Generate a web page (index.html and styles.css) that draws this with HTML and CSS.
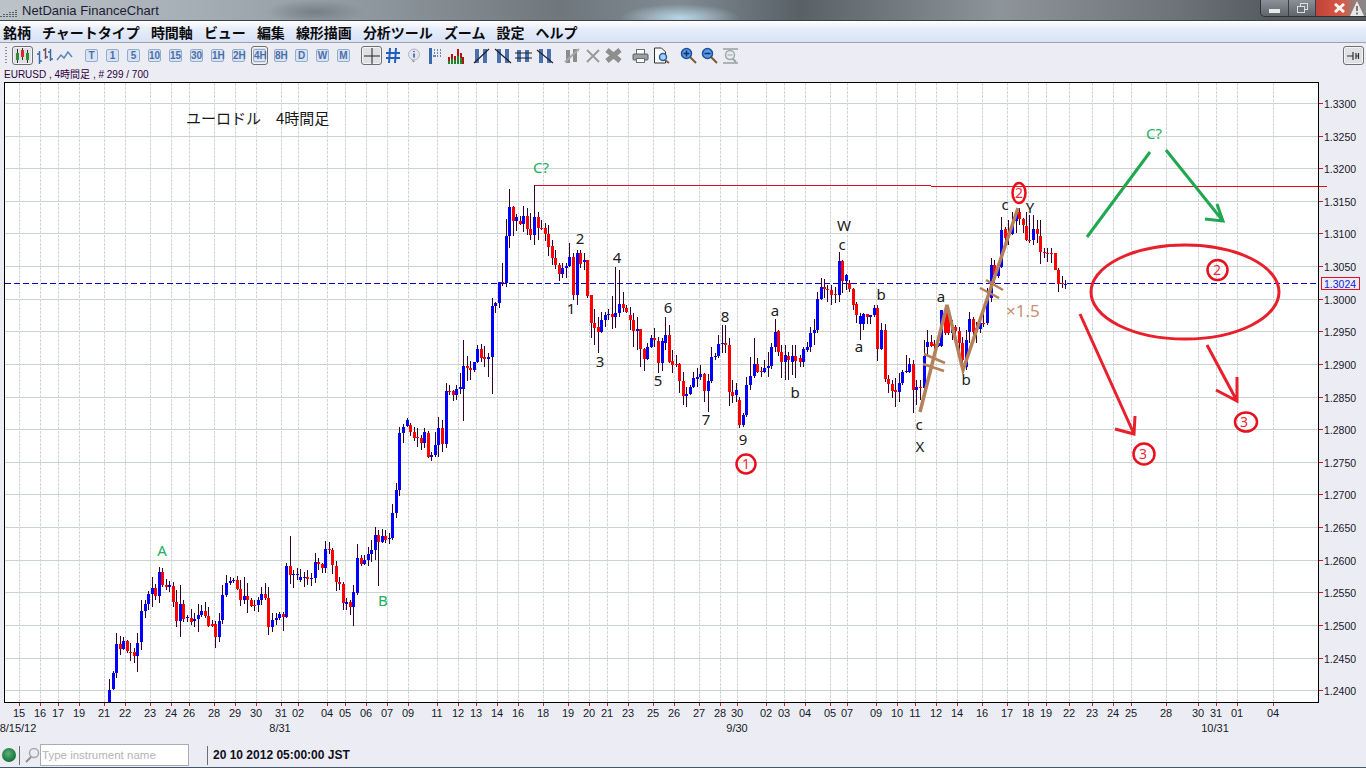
FILE: index.html
```html
<!DOCTYPE html>
<html lang="ja">
<head>
    <meta charset="UTF-8">
    <title>NetDania FinanceChart</title>
    <link rel="stylesheet" href="styles.css">
</head>
<body>

<div class="titlebar">
    <svg class="app-icon" width="18" height="10" viewBox="0 0 18 10">
        <path d="M1 9V7M4 9V5M7 9V6M10 9V3M13 9V4M16 9V1" stroke="#5a6068" stroke-width="2" stroke-dasharray="1 1"/>
    </svg>
    <span class="app-title">NetDania FinanceChart</span>
    <div class="win-controls">
        <div class="win-btn win-min"><span class="min-bar"></span></div>
        <div class="win-btn win-restore"><span class="restore-back"></span><span class="restore-front"></span></div>
        <div class="win-btn win-close">
            <svg width="13" height="10" viewBox="0 0 13 10"><path d="M2 1l9 8M11 1l-9 8" stroke="#f4f4f4" stroke-width="3"/></svg>
            <svg class="warn" width="14" height="15" viewBox="0 0 14 15"><path d="M7 0L14 15H0z" fill="#e8e8e8"/><path d="M7 5v5M7 11.500v2" stroke="#555" stroke-width="1.500"/></svg>
        </div>
    </div>
</div>

<div class="menubar">
    <span>銘柄</span>
    <span>チャートタイプ</span>
    <span>時間軸</span>
    <span>ビュー</span>
    <span>編集</span>
    <span>線形描画</span>
    <span>分析ツール</span>
    <span>ズーム</span>
    <span>設定</span>
    <span>ヘルプ</span>
</div>

<div class="toolbar">
    <div class="grip"></div>
    <div class="tool-group">
        <div class="tool toggled">
            <svg width="18" height="16" viewBox="0 0 18 16">
                <path d="M3.500 1v14M8.500 0v12M13.500 2v13" stroke="#303030"/>
                <rect x="2" y="5" width="3" height="7" fill="#2f8a3c"/>
                <rect x="7" y="2" width="3" height="7" fill="#d02c2c"/>
                <rect x="12" y="5" width="3" height="7" fill="#2f8a3c"/>
            </svg>
        </div>
        <div class="tool">
            <svg width="18" height="18" viewBox="0 0 18 18" fill="none">
                <path d="M4.500 4v13M2 7h3M4 14h3" stroke="#3a68a8" stroke-width="1.500"/>
                <path d="M10.500 1v11M8 3h3M10 10h3" stroke="#6a5060" stroke-width="1.500"/>
                <path d="M15.500 2v12M13 5h3M15 12h3" stroke="#3a68a8" stroke-width="1.500"/>
            </svg>
        </div>
        <div class="tool">
            <svg width="17" height="12" viewBox="0 0 17 12" fill="none">
                <path d="M1 10l4-5 3 3 4-6 4 5" stroke="#5a86b8" stroke-width="1.500"/>
            </svg>
        </div>
    </div>
    <div class="tool-group periods">
        <div class="tool"><span class="period">T</span></div>
        <div class="tool"><span class="period">1</span></div>
        <div class="tool"><span class="period">5</span></div>
        <div class="tool"><span class="period">10</span></div>
        <div class="tool"><span class="period">15</span></div>
        <div class="tool"><span class="period">30</span></div>
        <div class="tool"><span class="period">1H</span></div>
        <div class="tool"><span class="period">2H</span></div>
        <div class="tool toggled narrow"><span class="period">4H</span></div>
        <div class="tool"><span class="period">8H</span></div>
        <div class="tool"><span class="period">D</span></div>
        <div class="tool"><span class="period">W</span></div>
        <div class="tool"><span class="period">M</span></div>
    </div>
    <div class="tool-group cross-group">
        <div class="tool toggled">
            <svg width="16" height="16" viewBox="0 0 16 16"><path d="M8 0v16M0 8h16" stroke="#202020"/></svg>
        </div>
        <div class="tool">
            <svg width="16" height="17" viewBox="0 0 16 17"><path d="M5 1L4 16M11 1l-1 15M1 6h14M1 11h14" stroke="#1f5fc0" stroke-width="2"/></svg>
        </div>
        <div class="tool">
            <svg width="14" height="15" viewBox="0 0 14 15">
                <path d="M7 14l-2-3" stroke="#a0a0a0" stroke-width="2"/>
                <circle cx="7" cy="6.500" r="5.500" fill="#e4e4ea" stroke="#b4b4c0"/>
                <path d="M7 3v1M7 5.500v4" stroke="#2a4fb0" stroke-width="1.500"/>
            </svg>
        </div>
        <div class="tool">
            <svg width="16" height="18" viewBox="0 0 16 18" fill="none">
                <path d="M3.500 1v16" stroke="#3a68a8" stroke-width="3"/>
                <path d="M6 9h3M7 3h1M10 3h1M13 3h1M7 6h1M10 6h1M13 6h1M10 9h1M13 9h1" stroke="#3a68a8" stroke-width="1.500"/>
            </svg>
        </div>
        <div class="tool">
            <svg width="17" height="16" viewBox="0 0 17 16">
                <path d="M2 16V9M5 16V6M8 16V8M11 16V1M14 16V5M16 16V9" stroke="#b01414" stroke-width="2"/>
                <path d="M2 16v-3M5 16v-5M8 16v-4M11 16v-8M14 16v-6" stroke="#1c8a2c" stroke-width="2"/>
            </svg>
        </div>
    </div>
    <div class="tool-group lines-group">
        <div class="tool"><svg width="18" height="16" viewBox="0 0 18 16"><path d="M4 1v14M12 1v14" stroke="#4a70b0" stroke-width="4"/><path d="M1 15L16 1" stroke="#222" stroke-width="1.200"/></svg></div>
        <div class="tool"><svg width="18" height="16" viewBox="0 0 18 16"><path d="M5 1v14M13 1v14" stroke="#4a70b0" stroke-width="4"/><path d="M1 1l16 14" stroke="#222" stroke-width="1.200"/></svg></div>
        <div class="tool"><svg width="18" height="16" viewBox="0 0 18 16"><path d="M4 2v12M12 2v12" stroke="#4a70b0" stroke-width="4"/><path d="M0 5h17M0 10h17" stroke="#222"/></svg></div>
        <div class="tool"><svg width="18" height="16" viewBox="0 0 18 16"><path d="M5 1v14M13 1v14" stroke="#4a70b0" stroke-width="4"/><path d="M1 2l16 13" stroke="#222" stroke-width="1.200"/></svg></div>
    </div>
    <div class="tool-group delete-group">
        <div class="tool"><svg width="16" height="16" viewBox="0 0 16 16"><path d="M4 2v13M11 1v13" stroke="#8c8c8c" stroke-width="4"/><path d="M1 14L15 1" stroke="#a8a8a8" stroke-width="2"/></svg></div>
        <div class="tool"><svg width="14" height="14" viewBox="0 0 14 14"><path d="M1 1l12 12M13 1L1 13" stroke="#9a9a9a" stroke-width="2"/></svg></div>
        <div class="tool"><svg width="17" height="15" viewBox="0 0 17 15"><path d="M2 2l13 11M15 2L2 13" stroke="#8e8e8e" stroke-width="5"/></svg></div>
    </div>
    <div class="tool-group print-group">
        <div class="tool">
            <svg width="17" height="16" viewBox="0 0 17 16">
                <rect x="4.500" y="1.500" width="8" height="5" fill="#fff" stroke="#707070"/>
                <rect x="1" y="6" width="15" height="6" rx="1" fill="#9aa0a8" stroke="#5a5f66"/>
                <rect x="4.500" y="10.500" width="8" height="4" fill="#fff" stroke="#707070"/>
            </svg>
        </div>
        <div class="tool">
            <svg width="18" height="17" viewBox="0 0 18 17" fill="none">
                <path d="M1.500 1h7l4 4v11h-11z" fill="#fff" stroke="#303030"/>
                <path d="M12 13l4 3" stroke="#806040" stroke-width="2"/>
                <circle cx="10" cy="10" r="3.500" fill="#a8d0f0" stroke="#2a5fa8" stroke-width="1.500"/>
            </svg>
        </div>
    </div>
    <div class="tool-group zoom-group">
        <div class="tool">
            <svg width="17" height="17" viewBox="0 0 17 17" fill="none">
                <path d="M10 10l6 6" stroke="#7a5a30" stroke-width="2"/>
                <circle cx="6.500" cy="6.500" r="5" fill="#5a9ae0" stroke="#1c4fa0" stroke-width="1.500"/>
                <path d="M3.500 6.500h6M6.500 3.500v6" stroke="#10306a" stroke-width="1.500"/>
            </svg>
        </div>
        <div class="tool">
            <svg width="17" height="17" viewBox="0 0 17 17" fill="none">
                <path d="M10 10l6 6" stroke="#7a5a30" stroke-width="2"/>
                <circle cx="6.500" cy="6.500" r="5" fill="#5a9ae0" stroke="#1c4fa0" stroke-width="1.500"/>
                <path d="M3.500 6.500h6" stroke="#10306a" stroke-width="1.500"/>
            </svg>
        </div>
        <div class="tool">
            <svg width="17" height="16" viewBox="0 0 17 16" fill="none">
                <path d="M1 1h15M1 15h15" stroke="#9aa0a0" stroke-width="1.500"/>
                <path d="M10 10l4 4" stroke="#a0a0a0" stroke-width="2"/>
                <circle cx="8" cy="7" r="4.500" fill="#e4ecea" stroke="#a0aaa8" stroke-width="1.500"/>
                <path d="M5.500 7h5" stroke="#a0a0a0"/>
            </svg>
        </div>
    </div>
    <div class="tool toggled pin">
        <svg width="14" height="12" viewBox="0 0 14 12"><path d="M0 6h6M6 2v8M9 3v6M11.500 3v6M9 6h3" stroke="#303030" stroke-width="1.200"/></svg>
    </div>
</div>

<div class="info-label">EURUSD , 4時間足 , # 299 / 700</div>

<svg id="chart" class="chart" width="1366" height="660" viewBox="0 82 1366 660">
    <rect class="plot-bg" x="4.500" y="82.500" width="1314" height="620"/>
    <g id="grid"></g>
    <path class="stop-line dark" d="M534 185.500H931"/>
    <path class="stop-line" d="M931 186.500H1327"/>
    <path class="last-line" d="M5 283.500H1318"/>
    <g id="candles"></g>
    <rect class="plot-frame" x="4.500" y="82.500" width="1314" height="620"/>
    <g id="axis"></g>

    <rect class="last-box" x="1321.500" y="277.500" width="38" height="12"/>
    <text class="last-text" x="1324" y="288">1.3024</text>

    <text class="title-note" x="186" y="124">ユーロドル</text>
    <text class="title-note" x="276" y="124">4時間足</text>

    <text class="wave green" x="541" y="173">C?</text>
    <text class="wave green" x="162" y="556">A</text>
    <text class="wave green" x="383" y="606">B</text>
    <text class="wave green" x="1154" y="139">C?</text>

    <text class="wave" x="580" y="244">2</text>
    <text class="wave" x="571" y="314">1</text>
    <text class="wave" x="617" y="263">4</text>
    <text class="wave" x="600" y="367">3</text>
    <text class="wave" x="668" y="313">6</text>
    <text class="wave" x="658" y="386">5</text>
    <text class="wave" x="725" y="322">8</text>
    <text class="wave" x="706" y="425">7</text>
    <text class="wave" x="743" y="445">9</text>
    <text class="wave" x="775" y="316">a</text>
    <text class="wave" x="795" y="398">b</text>
    <text class="wave" x="844" y="231">W</text>
    <text class="wave" x="842" y="250">c</text>
    <text class="wave" x="859" y="352">a</text>
    <text class="wave" x="881" y="300">b</text>
    <text class="wave" x="941" y="302">a</text>
    <text class="wave" x="966" y="385">b</text>
    <text class="wave" x="919" y="430">c</text>
    <text class="wave" x="920" y="452">X</text>
    <text class="wave" x="1005" y="210">c</text>
    <text class="wave" x="1030" y="213">Y</text>
    <text class="times" x="1006" y="317">×1.5</text>

    <path class="brown" d="M920 412L947 305L963 370L1018 208"/>
    <path class="brown thin" d="M924 354L945 363M923 364L944 371M986 280L1003 290M980 288L999 298"/>

    <path class="green-stroke" d="M1087 237L1150 152M1166 150L1223 221M1217 204L1223 221L1205 219"/>
    <ellipse class="red-stroke" cx="1185" cy="292" rx="94" ry="47"/>
    <path class="red-stroke" d="M1080 314L1134 434M1135 416L1134 434L1115 429M1207 345L1237 401M1237 377L1237 401L1216 390"/>

    <circle class="red-ring" cx="746" cy="464" r="9.500"/>
    <text class="ring-text" x="746" y="469">1</text>
    <ellipse class="red-ring" cx="1019" cy="193" rx="6.500" ry="10"/>
    <text class="ring-text" x="1019" y="198">2</text>
    <circle class="red-ring" cx="1217.500" cy="270" r="10"/>
    <text class="ring-text" x="1217" y="275">2</text>
    <circle class="red-ring" cx="1144" cy="454" r="10.500"/>
    <text class="ring-text" x="1143" y="459">3</text>
    <ellipse class="red-ring" cx="1246" cy="422" rx="11" ry="9.500"/>
    <text class="ring-text" x="1244" y="427">3</text>
</svg>

<div class="statusbar">
    <span class="status-ball"></span>
    <span class="status-sep"></span>
    <svg class="status-search" width="15" height="16" viewBox="0 0 15 16" fill="none">
        <circle cx="9" cy="6" r="4.500" stroke="#a8a8a8" stroke-width="1.500"/>
        <path d="M6 10l-5 5" stroke="#909090" stroke-width="2"/>
    </svg>
    <div class="instrument-box">Type instrument name</div>
    <span class="status-sep date-sep"></span>
    <span class="status-date">20 10 2012 05:00:00 JST</span>
</div>

<script src="chart.js"></script>

</body>
</html>
```

FILE: styles.css
```css
* {
    box-sizing: border-box;
}

html, body {
    margin: 0;
    width: 1366px;
    height: 768px;
    overflow: hidden;
}

body {
    display: flex;
    flex-direction: column;
    font-family: "Liberation Sans", "Noto Sans CJK JP", sans-serif;
    background: repeating-conic-gradient(#f1eff4 0 25%, #e6ebf3 0 50%) 0 0 / 2px 2px;
}

.titlebar {
    display: flex;
    align-items: center;
    height: 21px;
    flex: none;
    border-bottom: 1px solid #3c4146;
    background:
        radial-gradient(ellipse 60px 14px at 680px 18px, #b9d6e8, transparent),
        radial-gradient(ellipse 50px 12px at 315px 12px, #777f86, transparent),
        linear-gradient(90deg, #bcc3c9 0, #a8b0b7 180px, #8e969d 380px, #6f777d 560px, #7f8a92 680px, #596167 800px, #8d949a 1000px, #6c7278 1180px, #565b60 1270px);
}

.app-icon {
    flex: none;
    margin-top: 5px;
}

.app-title {
    margin-left: 4px;
    font-size: 13px;
    letter-spacing: 0.05px;
    color: #1c1c34;
    white-space: nowrap;
}

.win-controls {
    display: flex;
    margin-left: auto;
    align-self: flex-start;
    height: 17px;
    border: 1px solid #2f3338;
    border-top: none;
    border-right: none;
    border-radius: 0 0 0 5px;
    overflow: hidden;
}

.win-btn {
    display: flex;
    align-items: center;
    justify-content: center;
    border-right: 1px solid #3a3f44;
    background: linear-gradient(#8a9096, #5f656b);
}

.win-min {
    width: 28px;
}

.min-bar {
    width: 11px;
    height: 4px;
    margin-top: 5px;
    background: #e8e8e8;
}

.win-restore {
    position: relative;
    width: 27px;
}

.restore-back, .restore-front {
    position: absolute;
    width: 8px;
    height: 7px;
    border: 1.5px solid #dcdcdc;
}

.restore-back {
    left: 11px;
    top: 3px;
}

.restore-front {
    left: 8px;
    top: 6px;
    background: #6c7278;
}

.win-close {
    position: relative;
    width: 50px;
    justify-content: flex-start;
    padding-left: 17px;
    border-right: none;
    background: linear-gradient(90deg, #c04438, #d85a48 55%, #9a7a70 72%, #868a8c);
}

.warn {
    position: absolute;
    right: 2px;
    top: 1px;
}

.menubar {
    display: flex;
    align-items: center;
    gap: 11px;
    height: 22px;
    flex: none;
    padding-left: 3px;
    border-bottom: 1px solid #a0a2a8;
    background: linear-gradient(#ffffff, #e8eefa 35%, #d6e2f6);
    font-family: "Noto Sans CJK JP", sans-serif;
    font-size: 14px;
    font-weight: 700;
    color: #0c0c0c;
    white-space: nowrap;
}

.toolbar {
    display: flex;
    align-items: center;
    height: 25px;
    flex: none;
    padding-left: 4px;
}

.grip {
    width: 2px;
    height: 18px;
    margin: 0 5px 0 1px;
    background: repeating-linear-gradient(#8a8f96 0 1px, transparent 1px 3px);
}

.tool-group {
    display: flex;
}

.tool {
    display: flex;
    align-items: center;
    justify-content: center;
    width: 21px;
    height: 19px;
    flex: none;
}

.toggled {
    border: 1px solid #6f6f72;
    border-radius: 3px;
    background: #dfe0e4;
    box-shadow: inset 0 0 0 1px #f4f4f4;
}

.narrow {
    width: 17px;
    margin: 0 2px;
}

.period {
    display: block;
    width: 13px;
    height: 13px;
    border: 1px solid #92acd2;
    border-radius: 2px;
    background: #d8e3f3;
    font-size: 10px;
    font-weight: 700;
    line-height: 11px;
    text-align: center;
    color: #4c6fa6;
    white-space: nowrap;
}

.periods {
    margin-left: 6px;
}

.cross-group {
    margin-left: 7px;
}

.lines-group {
    margin-left: 5px;
}

.delete-group, .print-group {
    margin-left: 6px;
}

.zoom-group {
    margin-left: 6px;
}

.pin {
    margin-left: auto;
    margin-right: 2px;
}

.info-label {
    height: 14px;
    flex: none;
    padding-left: 4px;
    font-size: 10px;
    line-height: 14px;
    color: #30003c;
    white-space: nowrap;
}

.chart {
    display: block;
    flex: none;
}

.plot-bg {
    fill: #fff;
}

.plot-frame {
    fill: none;
    stroke: #000;
    shape-rendering: crispEdges;
}

.grid-h {
    stroke: #ccd5cc;
    shape-rendering: crispEdges;
}

.grid-v {
    stroke: #d4d4dc;
    stroke-dasharray: 3 1;
    shape-rendering: crispEdges;
}

.tick {
    stroke: #e01020;
    shape-rendering: crispEdges;
}

.axis-text {
    font-size: 11px;
    fill: #181828;
}

.price-text {
    font-size: 10.5px;
    fill: #181828;
}

.stop-line {
    fill: none;
    stroke: #f00818;
    shape-rendering: crispEdges;
}

.stop-line.dark {
    stroke: #c81030;
}

.last-line {
    fill: none;
    stroke: #0000c8;
    stroke-dasharray: 6 3;
    shape-rendering: crispEdges;
}

.wick {
    fill: #300030;
}

.body-b {
    fill: #0000ff;
}

.body-r {
    fill: #ff0000;
}

.last-box {
    fill: none;
    stroke: #e01020;
    shape-rendering: crispEdges;
}

.last-text {
    font-size: 10.5px;
    fill: #1020e0;
}

.title-note {
    font-family: "Noto Sans CJK JP", sans-serif;
    font-size: 15px;
    fill: #181818;
}

.wave {
    font-family: "Noto Sans", sans-serif;
    font-size: 15px;
    text-anchor: middle;
    fill: #202020;
}

.wave.green {
    fill: #20b060;
}

.times {
    font-family: "Noto Sans", sans-serif;
    font-size: 17px;
    fill: #c89070;
}

.brown {
    fill: none;
    stroke: #b5805a;
    stroke-width: 3.5;
}

.brown.thin {
    stroke-width: 2.5;
}

.green-stroke {
    fill: none;
    stroke: #20a850;
    stroke-width: 3;
}

.red-stroke {
    fill: none;
    stroke: #e8202c;
    stroke-width: 3;
}

.red-ring {
    fill: none;
    stroke: #e8101c;
    stroke-width: 2.5;
}

.ring-text {
    font-family: "Noto Sans", sans-serif;
    font-size: 14px;
    text-anchor: middle;
    fill: #f02838;
}

.statusbar {
    display: flex;
    align-items: center;
    height: 26px;
    flex: none;
    padding: 2px 0 1px 2px;
    border-bottom: 1px solid #46566a;
}

.status-ball {
    width: 14px;
    height: 14px;
    flex: none;
    border-radius: 50%;
    background: radial-gradient(circle at 45% 40%, #5fb078, #0f7038 75%);
}

.status-sep {
    width: 1px;
    height: 19px;
    flex: none;
    margin-left: 3px;
    background: #6a6f76;
}

.status-search {
    flex: none;
    margin-left: 5px;
}

.instrument-box {
    width: 149px;
    height: 22px;
    flex: none;
    padding-left: 1px;
    border: 1px solid #a8acb4;
    background: #fff;
    font-size: 11.5px;
    line-height: 20px;
    color: #b4b4b8;
    white-space: nowrap;
}

.date-sep {
    margin-left: 18px;
}

.status-date {
    margin-left: 5px;
    font-size: 12px;
    font-weight: 700;
    color: #10101c;
    white-space: nowrap;
}
```

FILE: chart.js
```js
const SVG_NS = 'http://www.w3.org/2000/svg';

// date ticks along the bottom: [x, label]
const dateTicks = [
    [19,'15'],[40,'16'],[58,'17'],[79,'19'],[104,'21'],[125,'22'],[150,'23'],[171,'24'],[189,'26'],
    [214,'28'],[235,'29'],[256,'30'],[281,'31'],[298,'02'],[327,'04'],[345,'05'],[366,'06'],[387,'07'],
    [408,'09'],[437,'11'],[458,'12'],[476,'13'],[497,'14'],[518,'16'],[543,'18'],[568,'19'],[589,'20'],
    [607,'21'],[628,'23'],[653,'25'],[674,'26'],[699,'27'],[720,'28'],[737,'30'],[766,'02'],[784,'03'],
    [805,'04'],[830,'05'],[847,'07'],[876,'09'],[897,'10'],[915,'11'],[936,'12'],[957,'14'],[982,'16'],
    [1007,'17'],[1028,'18'],[1046,'19'],[1069,'22'],[1092,'23'],[1113,'24'],[1131,'25'],[1166,'28'],
    [1198,'30'],[1216,'31'],[1237,'01'],[1273,'04']
];

const monthLabels = [[18,'8/15/12'],[280,'8/31'],[737,'9/30'],[1215,'10/31']];

// candles, traced at 3x: [x, colour, body top, body bottom, wick top, wick bottom]
// each section has the origin of its trace
const candleSections = [
    { x: 90, y: 400, rows: [
        [58,'b',870,905,838,905],[70,'b',820,867,812,870],[79,'b',733,820,700,834],[91,'r',733,746,708,765],
        [100,'b',724,747,712,750],[112,'r',724,754,720,760],[121,'r',755,757,730,782],[133,'r',757,767,745,790],
        [142,'b',730,767,700,815],[154,'b',633,727,600,750],[166,'b',612,633,600,654],[175,'b',582,612,572,630],
        [187,'b',565,582,532,622],[196,'r',565,587,552,600],[208,'b',516,587,502,608],[217,'r',516,555,503,560],
        [229,'r',555,560,537,570],[238,'b',555,560,543,575],[250,'r',558,605,545,620],[259,'r',606,662,570,680],
        [271,'b',612,662,555,712],[280,'r',612,657,600,665],[292,'b',651,653,645,665],[304,'r',655,665,627,675],
        [313,'b',657,662,640,680],[325,'b',645,657,612,697],[334,'b',633,645,615,650],[346,'r',633,648,606,655],
        [355,'r',648,677,620,680],[367,'r',672,677,660,680],[376,'r',672,710,663,745],[388,'b',664,710,640,725],
        [397,'b',585,660,555,672],[409,'b',548,585,525,590],[421,'b',544,548,530,555],[430,'b',539,542,535,550],
        [442,'r',540,567,527,570],[451,'r',567,600,540,617],[463,'b',588,600,530,612],[472,'r',588,600,548,640],
        [484,'r',600,617,595,620],[493,'r',615,618,600,632],[505,'b',600,615,590,635],[514,'b',582,600,562,615],
        [526,'r',582,594,548,600],[535,'r',594,680,560,705],[547,'b',660,681,640,695],[559,'b',655,660,640,675],
        [568,'b',642,654,635,660],[580,'r',642,650,635,692],[589,'b',498,652,490,655],[601,'r',498,525,408,552],
        [610,'b',522,525,510,565],[622,'b',522,524,505,540],[631,'b',531,539,508,545],[643,'b',531,534,515,560],
        [652,'r',531,537,510,555],[664,'b',534,537,520,558],[676,'b',487,534,460,550],[685,'r',487,492,475,510],
        [697,'r',492,503,488,518],[706,'b',447,503,423,518],[718,'r',447,450,427,462],[727,'r',450,495,445,522],
        [739,'r',498,545,483,572],[748,'r',545,551,530,570],[760,'r',552,610,545,630],[769,'b',606,611,595,630],
        [781,'r',606,620,600,645],[790,'b',576,620,555,677],[802,'b',474,580,432,585],[814,'r',474,492,465,498],
        [823,'b',480,492,465,495],[835,'b',462,480,440,497],[844,'b',450,462,420,485],[856,'b',405,450,380,480],
        [865,'r',405,425,390,557],[877,'b',408,425,388,430],[886,'r',408,420,390,430],[898,'b',414,418,400,432],
        [907,'b',339,414,313,420],[919,'b',270,339,250,355],[928,'b',100,270,82,287],[940,'b',82,100,72,128],
        [952,'b',60,78,55,82],[961,'r',75,95,70,108],[973,'r',96,113,82,122],[982,'r',110,113,85,140],
        [994,'r',114,128,105,150],[1003,'b',97,128,85,145],[1015,'r',99,170,92,175],[1024,'b',165,170,157,183],
        [1036,'b',136,165,95,172],[1045,'b',85,135,50,170]
    ]},
    { x: 390, y: 170, rows: [
        [157,'r',774,822,750,845],[169,'b',663,822,640,833],[178,'r',663,666,645,675],[190,'r',663,675,660,693],
        [199,'b',657,675,645,690],[211,'b',651,657,610,672],[220,'b',588,657,510,752],[232,'r',588,594,558,633],
        [241,'r',594,600,573,630],[253,'b',576,600,575,605],[262,'b',537,576,525,580],[274,'r',537,564,522,575],
        [283,'r',561,567,528,590],[295,'b',561,567,548,620],[307,'b',408,561,385,672],[316,'b',399,408,395,430],
        [328,'b',336,399,335,415],[337,'r',336,339,278,348],[349,'b',198,339,148,350],[358,'b',111,198,57,235],
        [370,'r',111,153,108,198],[379,'b',141,153,132,183],[391,'r',153,162,138,165],[400,'b',138,162,108,187],
        [412,'r',138,177,115,195],[421,'r',177,195,130,210],[433,'b',141,195,45,225],[445,'r',141,173,125,210],
        [454,'r',175,177,150,180],[466,'r',175,191,160,212],[475,'r',191,231,165,258]
    ]},
    { x: 480, y: 170, rows: [
        [217,'r',228,264,210,285],[226,'r',264,285,240,298],[238,'r',285,312,280,333],[247,'b',294,312,280,325],
        [259,'b',288,294,280,325],[268,'b',261,288,220,290],[280,'r',261,375,250,390],[292,'b',249,375,240,405],
        [301,'r',249,282,240,295],[313,'b',271,276,250,300],[322,'r',271,378,272,385],[334,'r',375,459,375,505],
        [343,'r',459,474,418,525],[355,'r',471,486,440,550],[364,'b',450,486,425,490],[376,'b',435,450,425,470],
        [385,'b',432,435,418,450],[397,'r',432,441,378,477],[406,'b',429,441,290,475],[418,'b',402,429,300,440],
        [430,'r',402,414,365,425],[439,'r',414,426,405,430],[451,'r',435,450,410,480],[460,'r',450,483,430,530],
        [472,'b',477,483,440,540],[481,'r',477,537,477,590],[493,'r',537,567,535,603],[502,'b',531,567,520,570],
        [514,'b',504,531,495,535],[523,'r',504,510,475,530],[535,'r',513,579,500,610],[547,'b',513,579,505,603],
        [556,'b',495,519,440,540],[568,'r',495,576,465,580],[577,'r',573,585,540,610],[589,'r',582,585,555,590],
        [598,'r',582,633,580,670],[610,'r',633,678,605,705],[619,'b',672,678,650,712],[631,'b',651,672,645,675],
        [640,'b',624,651,605,655],[652,'b',621,627,595,650],[661,'b',612,621,585,630],[673,'r',612,663,610,695],
        [685,'b',633,663,612,725],[694,'b',561,633,530,640],[706,'b',558,562,550,570],[715,'b',522,558,495,565],
        [727,'b',519,522,465,550],[736,'r',519,524,465,550],[748,'r',525,666,505,707],[757,'r',666,678,630,700],
        [769,'b',660,675,640,695],[778,'r',690,765,680,773],[790,'b',735,765,730,770],[799,'b',645,735,620,740],
        [811,'b',618,645,560,660],[823,'b',582,618,505,625],[832,'r',582,605,565,610],[844,'r',603,606,590,620],
        [853,'b',594,606,570,610],[865,'b',588,594,545,622],[874,'b',531,588,520,598],[886,'b',486,531,448,545],
        [895,'r',483,546,480,558]
    ]},
    { x: 0, y: 0, rows: [
        [2343,'r',1056,1086,1035,1134],[2355,'b',1065,1086,1035,1140],[2364,'r',1068,1080,1056,1140],
        [2376,'b',1068,1086,1035,1125],[2385,'r',1068,1083,1035,1134]
    ]},
    { x: 800, y: 170, rows: [
        [0,'r',565,575,555,590],[10,'b',537,575,530,590],[22,'b',530,540,515,545],[31,'b',489,531,470,545],
        [43,'b',480,489,448,525],[52,'b',387,480,365,490],[64,'b',351,387,325,390],[73,'r',351,357,328,385],
        [82,'r',356,360,345,395],[94,'r',360,375,345,405],[106,'r',373,376,350,398],[118,'b',273,375,245,395],
        [127,'r',273,333,270,370],[139,'b',315,333,312,360],[148,'r',339,357,330,365],[160,'r',357,405,355,420],
        [169,'r',402,435,395,460],[181,'b',438,462,430,510],[190,'b',432,462,428,480],[202,'r',432,441,435,462],
        [211,'b',435,441,438,462],[223,'b',414,435,405,440],[232,'r',414,537,405,572],[244,'b',480,537,460,540],
        [256,'r',480,627,462,635],[265,'r',627,642,615,670],[277,'r',642,663,630,685],[286,'r',660,665,625,710],
        [298,'b',639,665,610,695],[307,'b',606,639,600,645],[319,'b',603,606,555,610],[328,'b',582,606,565,610],
        [340,'r',582,660,570,730],[349,'b',651,660,630,705],[361,'r',651,654,630,690],[373,'b',558,654,510,660],
        [382,'b',516,530,480,558],[394,'r',516,528,495,530],[403,'r',522,528,510,560],[415,'b',520,528,490,530],
        [424,'b',420,528,420,530],[436,'r',420,490,405,495],[445,'r',420,490,420,495],[457,'b',472,490,450,510],
        [466,'r',472,484,465,500],[478,'r',484,520,470,560],[487,'r',518,570,500,600],[499,'b',510,590,480,600],
        [508,'b',447,487,425,520],[520,'r',447,487,440,495],[529,'b',475,485,455,520],[541,'b',460,478,440,490],
        [550,'r',458,462,420,470],[562,'b',385,459,355,465],[574,'b',285,385,265,395],[583,'r',285,315,270,340],
        [595,'b',290,318,280,325],[604,'b',180,290,140,295],[616,'r',178,205,170,235],[625,'r',190,200,150,225],
        [637,'b',160,192,125,195],[649,'b',125,152,120,190],[658,'r',125,147,115,165],[670,'r',147,165,143,190],
        [679,'r',168,210,125,212],[688,'r',210,212,135,220],[700,'b',178,210,135,225],[712,'r',178,192,150,220],
        [721,'r',198,245,150,282],[733,'r',245,249,235,265],[742,'r',248,251,235,275],[754,'r',249,252,235,280],
        [766,'r',250,300,250,300],[775,'r',300,342,295,365],[787,'r',340,343,318,355],[796,'b',341,344,330,358]
    ]}
];

function addEl(parent, tag, attrs, text) {
    const el = document.createElementNS(SVG_NS, tag);
    for (const key in attrs) {
        el.setAttribute(key, attrs[key]);
    }
    if (text) {
        el.textContent = text;
    }
    parent.appendChild(el);
    return el;
}

function drawGrid() {
    const grid = document.getElementById('grid');
    const axis = document.getElementById('axis');

    for (let k = 0; k <= 18; k++) {
        const y = Math.round(103 + k * 32.62) + 0.5;
        addEl(grid, 'line', { class: 'grid-h', x1: 5, x2: 1318, y1: y, y2: y });
        addEl(axis, 'line', { class: 'tick', x1: 1319, x2: 1323, y1: y, y2: y });
        addEl(axis, 'text', { class: 'price-text', x: 1324, y: y + 4.5 }, (1.33 - k * 0.005).toFixed(4));
    }

    dateTicks.forEach(([x, label]) => {
        addEl(grid, 'line', { class: 'grid-v', x1: x + 0.5, x2: x + 0.5, y1: 83, y2: 702 });
        addEl(axis, 'line', { class: 'tick', x1: x + 0.5, x2: x + 0.5, y1: 703, y2: 706 });
        addEl(axis, 'text', { class: 'axis-text', x: x, y: 717, 'text-anchor': 'middle' }, label);
    });

    monthLabels.forEach(([x, label]) => {
        addEl(axis, 'text', { class: 'axis-text', x: x, y: 732, 'text-anchor': 'middle' }, label);
    });
}

function drawCandles() {
    const group = document.getElementById('candles');
    candleSections.forEach(section => {
        section.rows.forEach(([zx, colour, top, bottom, wickTop, wickBottom]) => {
            const x = Math.floor(section.x + zx / 3);
            const y = v => Math.round(section.y + v / 3);
            addEl(group, 'rect', { class: 'wick', x: x, y: y(wickTop), width: 1, height: Math.max(y(wickBottom) - y(wickTop), 1) });
            addEl(group, 'rect', { class: 'body-' + colour, x: x - 1, y: y(top), width: 3, height: Math.max(y(bottom) - y(top), 1) });
        });
    });
}

drawGrid();
drawCandles();
```
